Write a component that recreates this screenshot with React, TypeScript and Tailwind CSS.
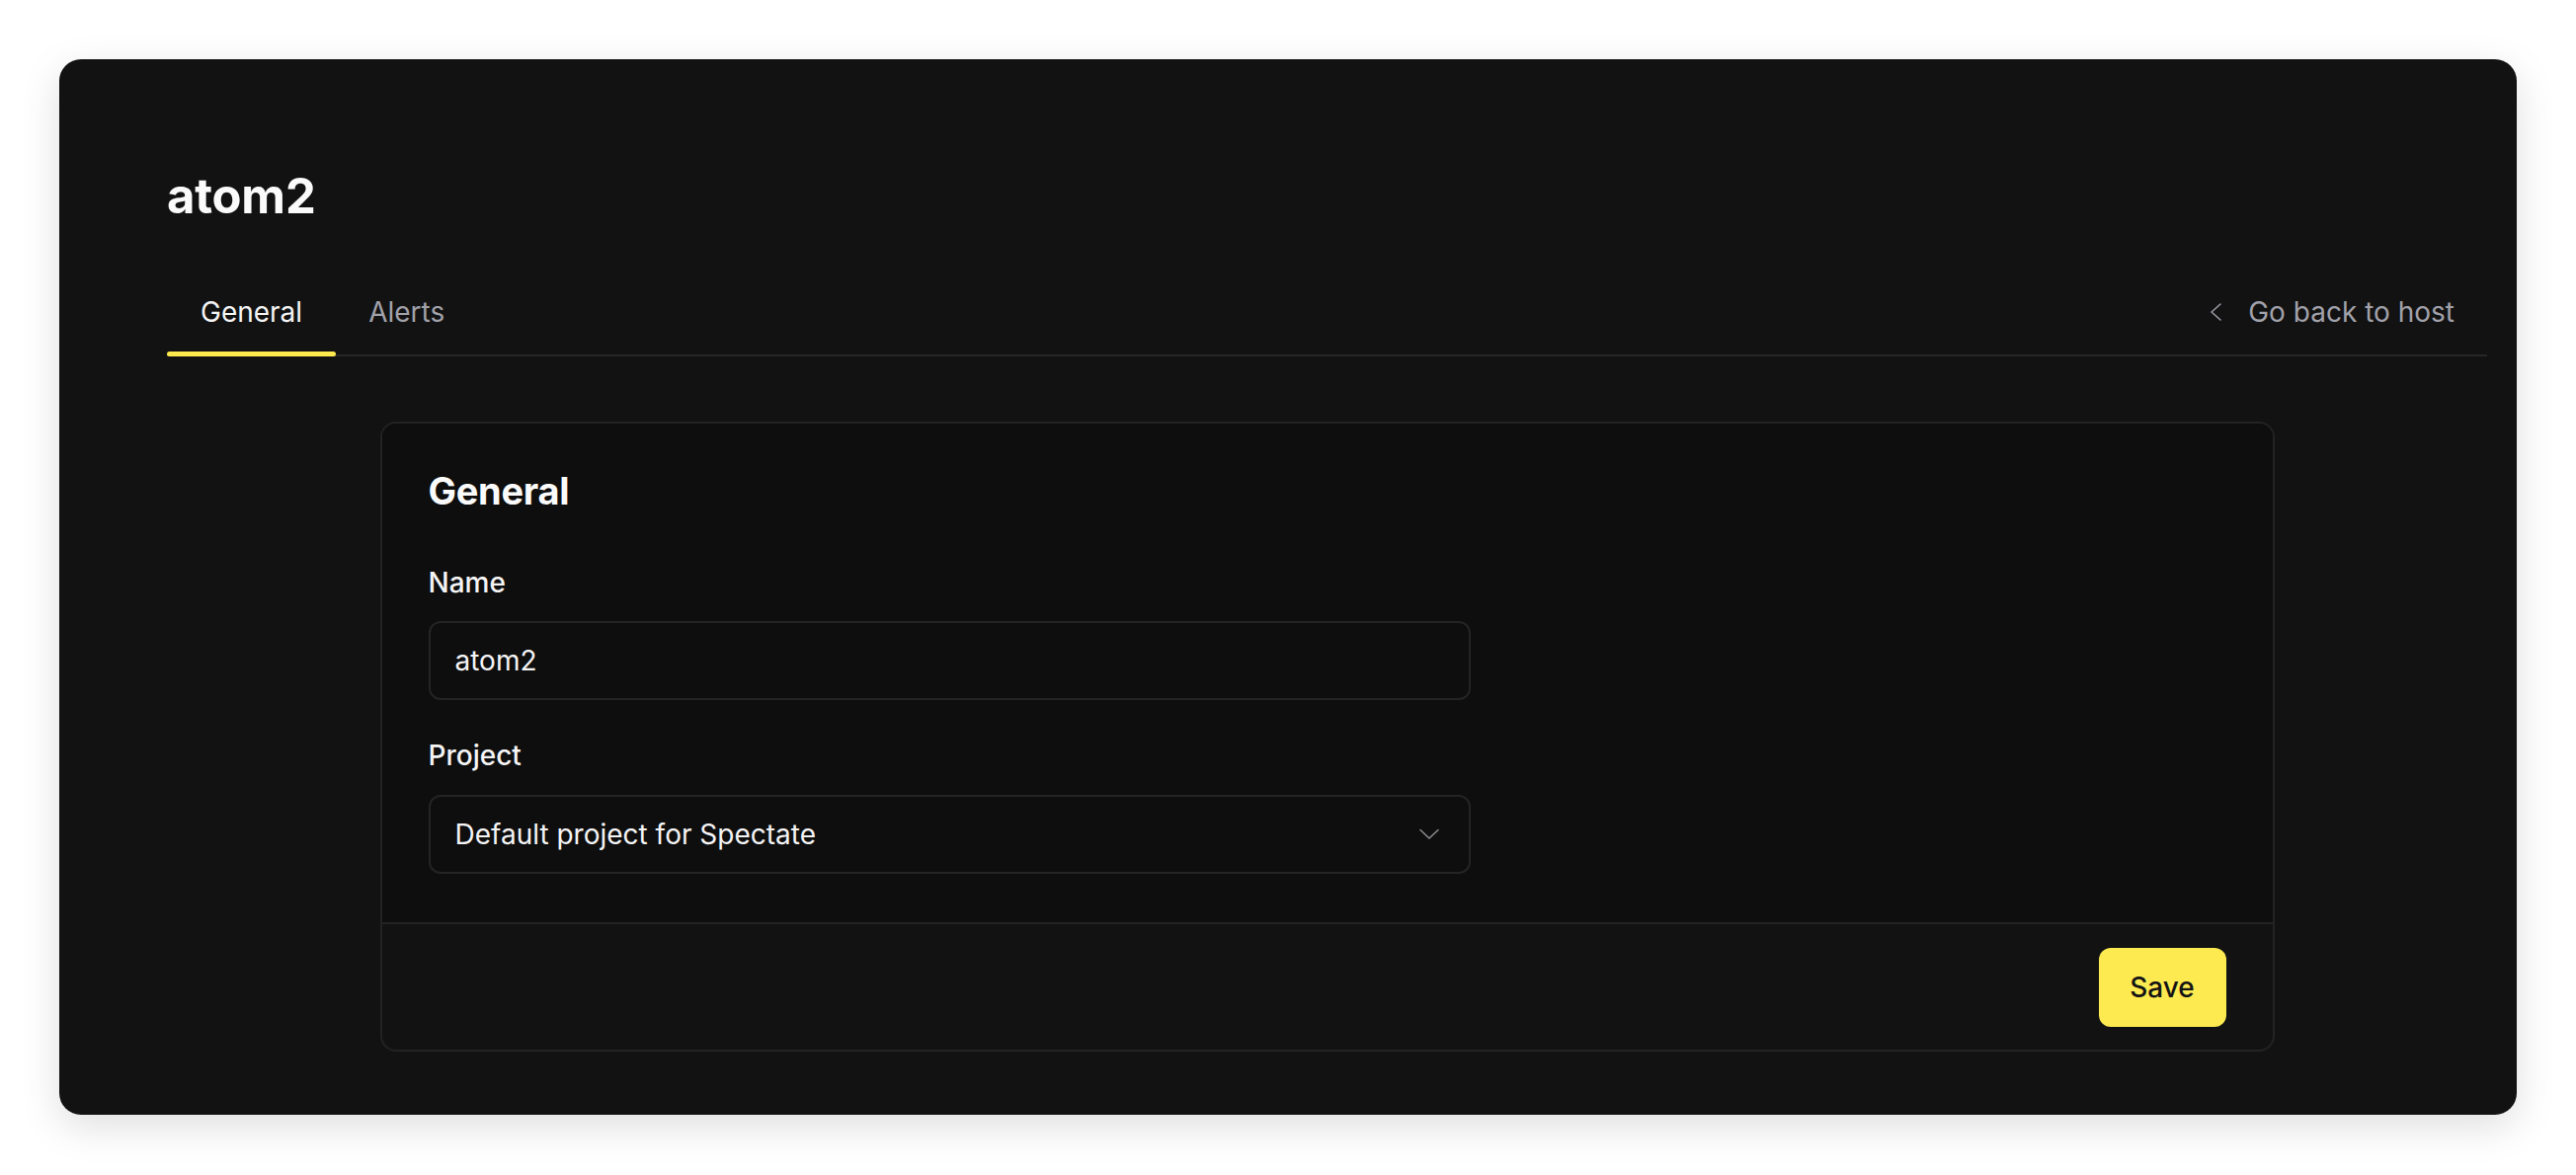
import React from "react";

function ChevronLeftIcon() {
  return (
    <svg width="12" height="18" viewBox="0 0 12 18" fill="none">
      <polyline points="11,1 2,9 11,17" stroke="#9a9aa2" strokeWidth="1.6" strokeLinecap="round" strokeLinejoin="round" />
    </svg>
  );
}

function ChevronDownIcon() {
  return (
    <svg width="20" height="12" viewBox="0 0 20 12" fill="none">
      <polyline points="1,1.5 10,10 19,1.5" stroke="#8a8a8f" strokeWidth="1.6" strokeLinecap="round" strokeLinejoin="round" />
    </svg>
  );
}

export default function App() {
  return (
    <div
      className="min-h-[1190px] bg-white p-[60px] pb-[61px]"
      style={{ fontFamily: "Inter, 'Noto Sans', sans-serif" }}
    >
      <div className="h-[1069px] w-full rounded-[22px] bg-[#121212] pl-[109px] pr-[30px] pt-[115px] shadow-[0_12px_40px_rgba(0,0,0,0.13)]">
        <h1 className="text-[49px] font-bold leading-[48px] text-[#fafafa] tracking-[-0.2px]">atom2</h1>

        <div className="mt-[53px] flex items-end justify-between border-b-2 border-[#262628]">
          <div className="flex">
            <div className="-mb-[2px] flex flex-col">
              <div className="px-[34px] pt-5 pb-5 text-[28px] leading-[40px] font-normal text-[#f4f4f5]">General</div>
              <div className="h-[5px] rounded-full bg-[#fde84d]" />
            </div>
            <div className="-mb-[2px] flex flex-col">
              <div className="px-[33px] pt-5 pb-5 text-[28px] leading-[40px] font-normal text-[#a1a1aa]">Alerts</div>
              <div className="h-[5px]" />
            </div>
          </div>
          <div className="-mb-[2px] flex flex-col">
            <div className="flex items-center gap-[27px] pr-[33px] pt-5 pb-5 text-[28px] leading-[40px] font-normal text-[#a1a1aa]">
              <ChevronLeftIcon />
              <span>Go back to host</span>
            </div>
            <div className="h-[5px]" />
          </div>
        </div>

        <div className="mx-auto mt-[66px] w-[1918px] overflow-hidden rounded-[16px] border-2 border-[#232325] bg-[#121212]">
          <div className="bg-[#0e0e0e] pl-[47px] pr-[47px] pt-[44px] pb-[49px]">
            <h2 className="text-[38px] font-bold leading-[48px] text-[#fafafa] tracking-[-0.3px]">General</h2>

            <div className="mt-[49px] text-[28px] leading-[40px] font-medium text-[#f4f4f5]">Name</div>
            <div className="mt-[19px] flex h-[80px] w-[1055px] items-center rounded-[12px] border-2 border-[#242426] bg-[#0e0e0e] pl-[25px] text-[28px] text-[#f4f4f5]">
              atom2
            </div>

            <div className="mt-[36px] text-[28px] leading-[40px] font-medium text-[#f4f4f5]">Project</div>
            <div className="mt-[20px] flex h-[80px] w-[1055px] items-center justify-between rounded-[12px] border-2 border-[#242426] bg-[#0e0e0e] pl-[25px] pr-[30px] text-[28px] text-[#f4f4f5]">
              <span>Default project for Spectate</span>
              <ChevronDownIcon />
            </div>
          </div>
          <div className="flex justify-end border-t-2 border-[#232325] pt-[24px] pb-[23px] pr-[47px]">
            <button className="flex h-[80px] w-[129px] items-center justify-center rounded-[12px] bg-[#fdea50] text-[28px] font-medium text-[#141414]">
              Save
            </button>
          </div>
        </div>
      </div>
    </div>
  );
}
